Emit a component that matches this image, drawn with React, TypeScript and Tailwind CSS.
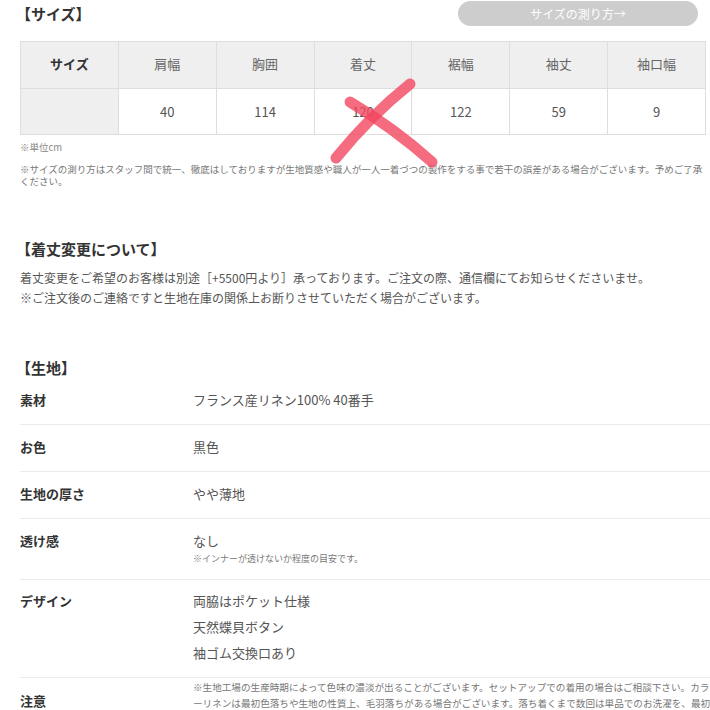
import React from 'react';

const sizeCols = [
  { label: 'サイズ', value: '' },
  { label: '肩幅', value: '40' },
  { label: '胸囲', value: '114' },
  { label: '着丈', value: '120' },
  { label: '裾幅', value: '122' },
  { label: '袖丈', value: '59' },
  { label: '袖口幅', value: '9' },
];

const font = { fontFamily: '"Noto Sans CJK JP", "Noto Sans", sans-serif' };

export default function App() {
  return (
    <div className="relative w-[710px] h-[710px] overflow-hidden bg-white pl-[20px]" style={font}>
      {/* Size header */}
      <div className="flex justify-between items-start w-[678px] h-[28px]">
        <h2 className="pt-[4px] text-[15px] leading-[20px] font-bold text-[#333] -ml-[4px]">【サイズ】</h2>
        <button className="mt-[1px] w-[240px] h-[25px] rounded-full bg-[#cdcdcd] text-white text-[12px] leading-[25px]">
          サイズの測り方→
        </button>
      </div>

      {/* Size table */}
      <table className="mt-[13px] w-[686px] table-fixed border-collapse">
        <thead>
          <tr className="h-[47px]">
            {sizeCols.map((c, i) => (
              <th key={c.label} className={`border border-[#dedede] bg-[#efefef] pb-[3px] text-[13px] ${i === 0 ? 'font-bold text-[#333]' : 'font-normal text-[#666]'}`}>
                {c.label}
              </th>
            ))}
          </tr>
        </thead>
        <tbody>
          <tr className="h-[46px]">
            {sizeCols.map((c, i) => (
              <td key={c.label} className={`border border-[#dedede] text-center text-[13px] text-[#555] ${i === 0 ? 'bg-[#efefef]' : ''}`}>
                {c.value}
              </td>
            ))}
          </tr>
        </tbody>
      </table>

      <p className="mt-[6px] text-[9.5px] leading-[12px] text-[#888]">※単位cm</p>
      <p className="mt-[10px] w-[686px] text-[9.5px] leading-[12px] text-[#777]">
        ※サイズの測り方はスタッフ間で統一、徹底はしておりますが生地質感や職人が一人一着づつの製作をする事で若干の誤差がある場合がございます。予めご了承ください。
      </p>

      {/* Length change */}
      <h2 className="mt-[52px] text-[15px] leading-[20px] font-bold text-[#333] -ml-[4px]">【着丈変更について】</h2>
      <div className="mt-[9px] text-[12px] leading-[20px] text-[#555]">
        <p>着丈変更をご希望のお客様は別途［+5500円より］承っております。ご注文の際、通信欄にてお知らせくださいませ。</p>
        <p>※ご注文後のご連絡ですと生地在庫の関係上お断りさせていただく場合がございます。</p>
      </div>

      {/* Fabric */}
      <h2 className="mt-[50px] text-[15px] leading-[20px] font-bold text-[#333] -ml-[4px]">【生地】</h2>
      <div className="w-[700px]">
        <div className="flex pt-[13px] pb-[16px] border-b border-[#ebebeb]">
          <div className="w-[173px] text-[13px] leading-[17px] font-bold text-[#333]">素材</div>
          <div className="text-[13px] leading-[17px] text-[#555]">フランス産リネン100% 40番手</div>
        </div>
        <div className="flex pt-[13px] pb-[16px] border-b border-[#ebebeb]">
          <div className="w-[173px] text-[13px] leading-[17px] font-bold text-[#333]">お色</div>
          <div className="text-[13px] leading-[17px] text-[#555]">黒色</div>
        </div>
        <div className="flex pt-[13px] pb-[16px] border-b border-[#ebebeb]">
          <div className="w-[173px] text-[13px] leading-[17px] font-bold text-[#333]">生地の厚さ</div>
          <div className="text-[13px] leading-[17px] text-[#555]">やや薄地</div>
        </div>
        <div className="flex pt-[13px] pb-[14px] border-b border-[#ebebeb]">
          <div className="w-[173px] text-[13px] leading-[17px] font-bold text-[#333]">透け感</div>
          <div>
            <p className="text-[13px] leading-[17px] text-[#555]">なし</p>
            <p className="mt-[4px] text-[9px] leading-[12px] text-[#777]">※インナーが透けないか程度の目安です。</p>
          </div>
        </div>
        <div className="flex pt-[8px] pb-[11px] border-b border-[#ebebeb]">
          <div className="w-[173px] text-[13px] leading-[26px] font-bold text-[#333]">デザイン</div>
          <div className="text-[13px] leading-[26px] text-[#555]">
            <p>両脇はポケット仕様</p>
            <p>天然蝶貝ボタン</p>
            <p>袖ゴム交換口あり</p>
          </div>
        </div>
        <div className="flex">
          <div className="w-[173px] shrink-0 pt-[14px] text-[13px] leading-[17px] font-bold text-[#333]">注意</div>
          <p className="pt-[1px] w-[522px] shrink-0 text-[9.6px] leading-[16px] text-[#777]">
            ※生地工場の生産時期によって色味の濃淡が出ることがございます。セットアップでの着用の場合はご相談下さい。カラーリネンは最初色落ちや生地の性質上、毛羽落ちがある場合がございます。落ち着くまで数回は単品でのお洗濯を、最初はお手洗いをおすすめいたします。
          </p>
        </div>
      </div>

      {/* hand-drawn cross annotation */}
      <svg className="absolute left-0 top-0 pointer-events-none" width="710" height="710" viewBox="0 0 710 710">
        <path d="M410 84 Q370 116 336 158" stroke="#f2465f" strokeOpacity="0.8" strokeWidth="11" fill="none" strokeLinecap="round" />
        <path d="M350 102 Q394 128 432 162" stroke="#f2465f" strokeOpacity="0.8" strokeWidth="11" fill="none" strokeLinecap="round" />
      </svg>
    </div>
  );
}
